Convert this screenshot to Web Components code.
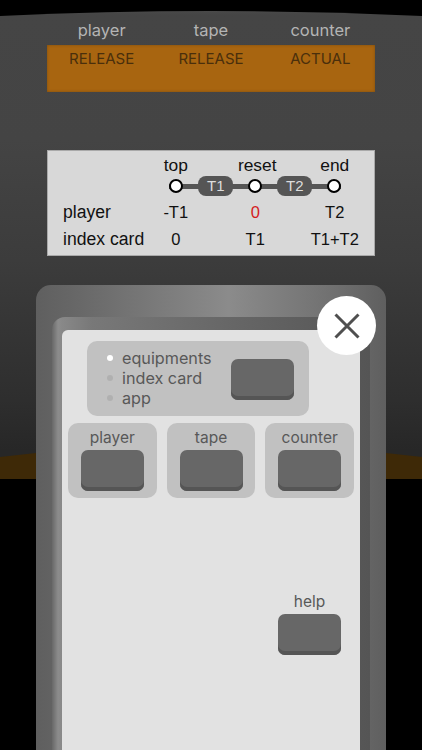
<!DOCTYPE html>
<html>
<head>
<meta charset="utf-8">
<style>
  html, body { margin: 0; padding: 0; background: #000; }
  body { width: 422px; height: 750px; overflow: hidden; position: relative; }
</style>
</head>
<body>
<device-body>
  <status-display></status-display>
  <timing-card></timing-card>
</device-body>
<modal-panel>
  <mode-group></mode-group>
  <div style="display:flex;gap:10px;margin:7px 6px 0 6px">
    <key-card label="player"></key-card>
    <key-card label="tape"></key-card>
    <key-card label="counter"></key-card>
  </div>
  <div style="display:flex;justify-content:flex-end;margin:89px 19px 0 0">
    <labeled-key label="help"></labeled-key>
  </div>
</modal-panel>

<script>
class DeviceBody extends HTMLElement {
  constructor() {
    super();
    this.attachShadow({ mode: 'open' });
    this.shadowRoot.innerHTML = `
      <style>
        :host {
          display: block;
          position: relative;
          box-sizing: border-box;
          height: 469px;
          margin-top: 10px;
          padding-top: 8px;
          clip-path: path('M0 6 Q211 -4 422 6 L422 469 L0 469 Z');
          background: linear-gradient(180deg, #4a4a4a 0, #454545 5px, #444 130px, #3c3c3c 250px, #2e2e2e 390px, #272727 440px);
        }
        /* worn brown band along the bottom edge */
        :host::after {
          content: "";
          position: absolute;
          left: 0;
          right: 0;
          top: 433px;
          height: 36px;
          clip-path: polygon(0 14px, 36px 10px, 386px 10px, 422px 14px, 422px 36px, 0 36px);
          background: #3e2907;
        }
      </style>
      <slot></slot>`;
  }
}

class StatusDisplay extends HTMLElement {
  constructor() {
    super();
    this.attachShadow({ mode: 'open' });
    this.shadowRoot.innerHTML = `
      <style>
        :host {
          display: block;
          margin: 0 47px;
          font-family: Inter, "Noto Sans", sans-serif;
        }
        .row { display: grid; grid-template-columns: repeat(3, 1fr); text-align: center; }
        .top { font-size: 16.5px; line-height: 24px; color: #b4b4b4; height: 27px; }
        .lcd {
          height: 47px;
          box-sizing: border-box;
          background: #a86510;
          box-shadow: inset 0 0 3px #7c4c10;
          font-size: 15px;
          line-height: 27px;
          color: #4a2f0c;
        }
      </style>
      <div class="row top"><span>player</span><span>tape</span><span>counter</span></div>
      <div class="row lcd"><span>RELEASE</span><span>RELEASE</span><span>ACTUAL</span></div>`;
  }
}

class TimingCard extends HTMLElement {
  constructor() {
    super();
    this.attachShadow({ mode: 'open' });
    this.shadowRoot.innerHTML = `
      <style>
        :host {
          display: block;
          box-sizing: border-box;
          margin: 58px 47px 0;
          height: 106px;
          padding: 2px 0 0 16px;
          background: #d8d8d8;
          box-shadow: 0 0 0 1px #a9a9a9 inset;
          color: #111;
          font: 16.5px "Liberation Sans", Arial, sans-serif;
        }
        .grid {
          display: grid;
          grid-template-columns: 73px 79.5px 79.5px 79.5px;
          grid-template-rows: 27px 21px 24px 30px;
          align-items: center;
          white-space: nowrap;
        }
        .grid span { text-align: center; }
        .grid span.name { text-align: left; font-size: 17.6px; }
        .grid span.head { font-size: 17.4px; }
        .grid span.nudge { padding-left: 4px; }
        .red { color: #d41c1c; }
        .track {
          grid-column: 2 / 5;
          justify-self: center;
          align-self: start;
          width: 172px;
          height: 20px;
          display: flex;
          justify-content: space-between;
          align-items: center;
          background: linear-gradient(#555, #555) center / 100% 5px no-repeat;
          margin-top: -3px;
        }
        .node {
          width: 14px;
          height: 14px;
          box-sizing: border-box;
          border-radius: 50%;
          border: 2.5px solid #000;
          background: #fff;
        }
        .pill {
          width: 35px;
          height: 20px;
          border-radius: 8px;
          background: #555;
          color: #ddd;
          font-size: 15px;
          line-height: 20px;
          text-align: center;
        }
      </style>
      <div class="grid">
        <span></span><span class="head">top</span><span class="head nudge">reset</span><span class="head">end</span>
        <span></span>
        <div class="track">
          <div class="node"></div><div class="pill">T1</div>
          <div class="node"></div><div class="pill">T2</div>
          <div class="node"></div>
        </div>
        <span class="name">player</span><span>-T1</span><span class="red">0</span><span>T2</span>
        <span class="name">index card</span><span>0</span><span>T1</span><span>T1+T2</span>
      </div>`;
  }
}

class ModalPanel extends HTMLElement {
  constructor() {
    super();
    this.attachShadow({ mode: 'open' });
    this.shadowRoot.innerHTML = `
      <style>
        :host {
          position: absolute;
          left: 36px;
          top: 285px;
          width: 350px;
          height: 465px;
          box-sizing: border-box;
          padding: 32px 16px 0;
          border-radius: 15px 15px 0 0;
          background: linear-gradient(90deg, #5f5f5f 0, #6a6a6a 15%, #8b8b8b 55%, #707070 85%, #5f5f5f 100%);
        }
        .frame {
          height: 100%;
          box-sizing: border-box;
          padding: 13px 10px 0;
          border-radius: 13px 13px 0 0;
          background: linear-gradient(90deg, #686868 0, #8c8c8c 6px, #888 10px, #787878 40px, #555 100%);
        }
        .sheet {
          height: 100%;
          box-sizing: border-box;
          padding-top: 11px;
          border-radius: 6px 6px 0 0;
          background: #e2e2e2;
        }
        .close {
          position: absolute;
          left: 281px;
          top: 11px;
          width: 59px;
          height: 59px;
          border-radius: 50%;
          background: #fff;
          display: flex;
          align-items: center;
          justify-content: center;
        }
      </style>
      <div class="frame"><div class="sheet"><slot></slot></div></div>
      <div class="close">
        <svg width="26" height="26" viewBox="0 0 26 26">
          <path d="M1.5 1.5 L24.5 24.5 M24.5 1.5 L1.5 24.5" stroke="#4f4f4f" stroke-width="3" fill="none"/>
        </svg>
      </div>`;
  }
}

class PushKey extends HTMLElement {
  constructor() {
    super();
    this.attachShadow({ mode: 'open' });
    this.shadowRoot.innerHTML = `
      <style>
        :host {
          display: block;
          width: 63px;
          height: 41px;
          box-sizing: border-box;
          border-radius: 7px;
          background: #676767;
          box-shadow: inset 0 -4px 0 #555;
        }
      </style>`;
  }
}

class ModeGroup extends HTMLElement {
  constructor() {
    super();
    this.attachShadow({ mode: 'open' });
    this.shadowRoot.innerHTML = `
      <style>
        :host {
          display: flex;
          align-items: center;
          justify-content: space-between;
          box-sizing: border-box;
          width: 222px;
          height: 75px;
          margin-left: 25px;
          padding: 1px 15px 0 20px;
          border-radius: 10px;
          background: #c1c1c1;
          color: #585858;
          font: 16.2px/20px Inter, "Noto Sans", sans-serif;
        }
        .list { margin-top: -3px; }
        .opt { display: flex; align-items: center; gap: 9px; }
        .dot { width: 6px; height: 6px; border-radius: 50%; background: #b0b0b0; }
        .on { background: #fff; }
      </style>
      <div class="list">
        <div class="opt"><div class="dot on"></div>equipments</div>
        <div class="opt"><div class="dot"></div>index card</div>
        <div class="opt"><div class="dot"></div>app</div>
      </div>
      <push-key></push-key>`;
  }
}

class LabeledKey extends HTMLElement {
  static get observedAttributes() {
    return ['label'];
  }

  constructor() {
    super();
    this.attachShadow({ mode: 'open' });
    this.shadowRoot.innerHTML = `
      <style>
        :host {
          display: flex;
          flex-direction: column;
          align-items: center;
          color: #585858;
          font: 15.5px/20px Inter, "Noto Sans", sans-serif;
        }
        .label { height: 22px; margin-top: 5px; }
      </style>
      <div class="label"></div>
      <push-key></push-key>`;
  }

  attributeChangedCallback() {
    this.shadowRoot.querySelector('.label').textContent = this.getAttribute('label') || '';
  }
}

class KeyCard extends HTMLElement {
  constructor() {
    super();
    this.attachShadow({ mode: 'open' });
    this.shadowRoot.innerHTML = `
      <style>
        :host {
          display: block;
          width: 89px;
          height: 75px;
          box-sizing: border-box;
          border-radius: 10px;
          background: #c1c1c1;
        }
      </style>
      <labeled-key></labeled-key>`;
  }

  connectedCallback() {
    this.shadowRoot.querySelector('labeled-key').setAttribute('label', this.getAttribute('label') || '');
  }
}

customElements.define('device-body', DeviceBody);
customElements.define('status-display', StatusDisplay);
customElements.define('timing-card', TimingCard);
customElements.define('modal-panel', ModalPanel);
customElements.define('push-key', PushKey);
customElements.define('mode-group', ModeGroup);
customElements.define('labeled-key', LabeledKey);
customElements.define('key-card', KeyCard);
</script>
</body>
</html>
